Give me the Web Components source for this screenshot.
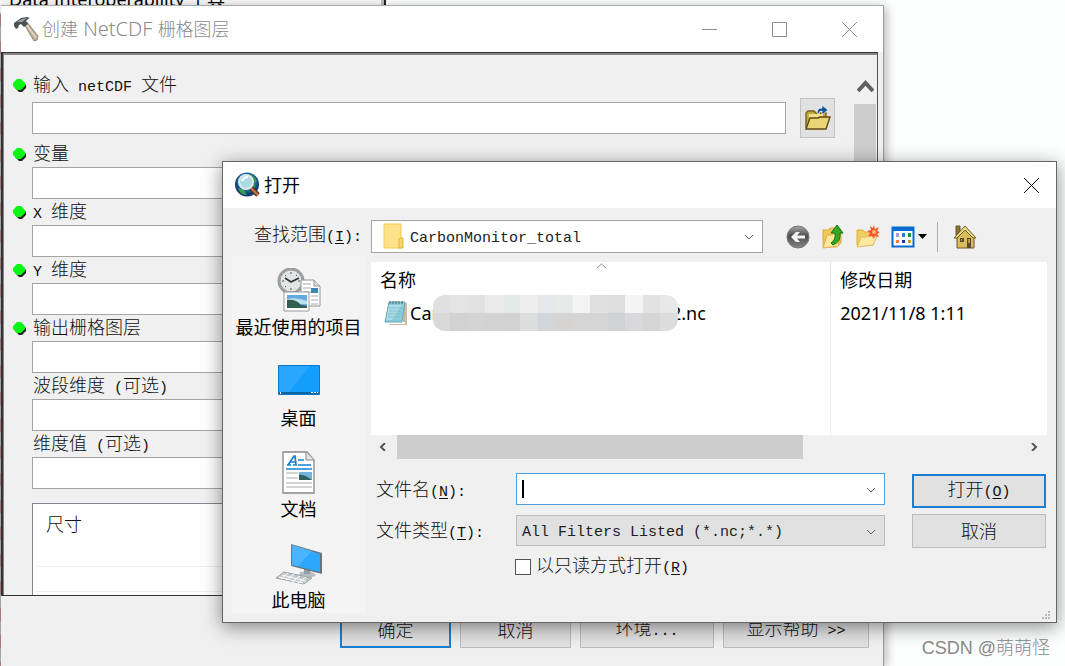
<!DOCTYPE html>
<html lang="zh-CN">
<head>
<meta charset="utf-8">
<title>创建 NetCDF 栅格图层</title>
<style>
    body {
        margin: 0;
        height: 100vh;
        overflow: hidden;
        background: #fdfefe;
        font: 18px/24px "Noto Sans", "Noto Sans CJK SC", sans-serif;
        color: #000;
    }
</style>
</head>
<body>
<desk-top></desk-top>
<script>
const base = `
    *, *::before, *::after { box-sizing: border-box; }
    [hidden] { display: none; }
    button, input, select { font: inherit; color: inherit; margin: 0; border-radius: 0; outline: none; }
    svg { display: block; }
    .latin { font-family: "Liberation Mono", monospace; font-size: 15px; font-weight: 400; white-space: pre; }
    u { text-underline-offset: 2px; }
`;

// latin runs get half-width glyphs, &X marks the access key
function mixed(text) {
    return text.replace(/[\x20-\x7e]+/g, run => {
        const safe = run.replace(/>/g, '&gt;').replace(/&([A-Z])/, '<u>$1</u>');
        return `<span class="latin">${safe}</span>`;
    });
}

function render(host, css, html) {
    const template = document.createElement('template');
    template.innerHTML = `<style>${base}${css}</style>${html}`;
    host.attachShadow({ mode: 'open' });
    host.shadowRoot.appendChild(template.content.cloneNode(true));
}

const icons = {
    hammer: `<svg width="26" height="26" viewBox="0 0 26 26">
        <path d="M11 8l3-2 11 14-1 4-3 1z" fill="#b9aa92" stroke="#8a7c68" stroke-width=".8"/>
        <path d="M13 8l10 14" stroke="#e4dac6" stroke-width="1.5"/>
        <path d="M1 7l3-2 4-3 6-1 3 1-2 1-2 2 2 3-4 3-3-3-2 1-1 3-2 1-2-3z" fill="#4c5154"/>
        <path d="M4 6l5-3 5-1-5 4z" fill="#a0a6a8"/></svg>`,
    globe: `<svg width="26" height="26" viewBox="0 0 26 26">
        <defs><radialGradient id="sea" cx=".5" cy=".4"><stop offset="0" stop-color="#5ac0d0"/><stop offset=".65" stop-color="#1477a0"/><stop offset="1" stop-color="#123a73"/></radialGradient></defs>
        <circle cx="12" cy="12.5" r="12" fill="url(#sea)"/>
        <path d="M14 2c4 1 7 4 8 8l-3 1 1 4-4 1-3-6zM3 16l6 2 3 5c-5 0-8-3-9-7z" fill="#3e9b50"/>
        <path d="M16 16l7 7" stroke="#532d1a" stroke-width="5"/><path d="M16 16l7 7" stroke="#bd7047" stroke-width="2.5"/>
        <circle cx="11" cy="10" r="7" fill="#acdbe5" stroke="#dfe9ed" stroke-width="2"/>
        <path d="M7 9q2-4 6-4" stroke="#fff" stroke-width="2" fill="none"/></svg>`,
    browse: `<svg width="26" height="26" viewBox="0 0 26 26">
        <path d="M1 23V8l2-2h6l2 2h10v4" fill="#c7a83a" stroke="#79621b" stroke-width="1.4"/>
        <path d="M4 9h14l-1 5H4z" fill="#f2df8e"/>
        <path d="M1 24l4-11h8l2-1h10l-4 12z" fill="#ecd576" stroke="#5e4a10" stroke-width="1.4"/>
        <path d="M12 8q0-5 5-5V0l6 5-6 5V6q-3 0-3 3z" fill="#15559e" stroke="#fff" stroke-width=".7"/></svg>`,
    folder: `<svg width="21" height="26" viewBox="0 0 21 26">
        <path d="M1 1h17v24H1z" fill="#fde28a" stroke="#f0ca50"/><path d="M16 25v-9l1-1h3v10z" fill="#f8d568" stroke="#e2b937"/></svg>`,
    back: `<svg width="24" height="24" viewBox="0 0 24 24">
        <defs><linearGradient id="steel" x2="0" y2="1"><stop offset="0" stop-color="#a8a8a8"/><stop offset=".45" stop-color="#4d4d4d"/><stop offset="1" stop-color="#878787"/></linearGradient></defs>
        <circle cx="12" cy="12" r="11" fill="url(#steel)" stroke="#777"/>
        <path d="M19 10.5h-8L14 7h-4l-5 5 5 5h4l-3-3.500h8z" fill="#f5f5f5"/></svg>`,
    up: `<svg width="24" height="26" viewBox="0 0 24 26">
        <path d="M2 6h6l1-2h9l2 2v13l-5 4H2z" fill="#f0c857" stroke="#d9a93a"/>
        <path d="M2 24l4-13h5l2-2h7l-3 13z" fill="#fde99e" stroke="#dfb34a"/>
        <path d="M10 19q5-3 4-10h-4l6-8 6 8h-3q1 9-7 12z" fill="#35a828" stroke="#14730f"/></svg>`,
    create: `<svg width="24" height="24" viewBox="0 0 24 24">
        <path d="M1 5h6l2 2h8v13H1z" fill="#f3cd62" stroke="#dfae45"/>
        <path d="M1 22l4-10h5l2-2h10l-5 10z" fill="#fdeaa2" stroke="#e3b655"/>
        <path d="M18 0l1 4 4-2-2 4 3 1-3 2 2 3-4-1-1 3-2-3-4 1 2-4-3-2 4-1-1-4 3 2z" fill="#f8562c"/><circle cx="18" cy="7" r="2" fill="#ffba78"/></svg>`,
    views: `<svg width="24" height="24" viewBox="0 0 24 24">
        <rect x="1.500" y="2.500" width="21" height="19" fill="#fff" stroke="#096bd1" stroke-width="2"/><path d="M1 2h22v4H1z" fill="#096bd1"/>
        <path d="M5 8h3v4H5z" fill="#a89bd2"/><path d="M11 8h3v4h-3z" fill="#1285e4"/><path d="M17 8h3v4h-3z" fill="#15942b"/>
        <path d="M5 15h3v3H5z" fill="#fb7647"/><path d="M11 15h3v3h-3z" fill="#0c38a0"/><path d="M17 15h3v3h-3z" fill="#cf9c0d"/></svg>`,
    home: `<svg width="24" height="24" viewBox="0 0 24 24">
        <path d="M3 10V1h4v5z" fill="#8a7434" stroke="#6b5624"/>
        <path d="M4 12v11h17V12l-8-8z" fill="#d8bd5b" stroke="#6b5624"/>
        <path d="M1 13L12 1l11 12h-3l-8-8-8 8z" fill="#eddc86" stroke="#6b5624"/>
        <path d="M7 13h4v4H7zM14 13h4v10h-4z" fill="#5b4929"/><path d="M8 14h1v2H8zM15 14h2v4h-2z" fill="#b49544"/></svg>`,
    note: `<svg width="25" height="26" viewBox="0 0 25 26">
        <path d="M19 3h4v22H6l-1-2h14z" fill="#c8bc99"/><path d="M5 22h16v2H5z" fill="#fff"/>
        <path d="M5 2h16l-3 20H1z" fill="#8ccbd9" stroke="#63a9ba"/>
        <path d="M5 5h13L8 20H2z" fill="#c0e8ef" opacity=".6"/>
        <path d="M5 8h13M5 11h12M4 14h13M4 17h12" stroke="#6cb3c3" stroke-width=".6"/>
        <path d="M6 1v3M9 1v3M12 1v3M15 1v3M18 1v3" stroke="#4a6970"/></svg>`,
    recent: `<svg width="44" height="44" viewBox="0 0 44 44">
        <circle cx="14" cy="13" r="12" fill="#e2e5e6" stroke="#999ea0" stroke-width="3"/>
        <path d="M14 4v2M14 20v2M5 13h2M21 13h2M8 7l1 1M20 7l-1 1M8 19l1-1" stroke="#555"/>
        <path d="M8 10l6 4 8-4" fill="none" stroke="#333" stroke-width="1.7"/>
        <path d="M24 12h13l6 6v20H24z" fill="#fff" stroke="#929292"/><path d="M37 12v6h6" fill="#ddd" stroke="#929292"/>
        <path d="M26 16h8M26 20h8M26 24h8M34 28h7M34 32h7M34 36h7" stroke="#aaa"/><path d="M34 20h7v5h-7z" fill="#3d87b2"/>
        <path d="M7 24h25v19H7z" fill="#fff" stroke="#999"/><path d="M10 27h20v13H10z" fill="#65aadc"/>
        <path d="M10 31q10-2 20 2v3H10z" fill="#bce0ee"/><path d="M10 32q9-1 14 5l6 1v2H10z" fill="#315f50"/></svg>`,
    desktop: `<svg width="44" height="44" viewBox="0 0 44 44">
        <path d="M1.500 6.500h41v29h-41z" fill="#139dfc" stroke="#0878c7"/><path d="M2 7h31L12 33H2z" fill="#35acff" opacity=".65"/>
        <path d="M2 33h40v2H2z" fill="#0a66a2"/><path d="M3 33h1v2H3zM34 33h2v1h-2zM37 33h2v1h-2zM40 33h1v1h-1z" fill="#fff"/></svg>`,
    documents: `<svg width="44" height="44" viewBox="0 0 44 44">
        <path d="M6 2h24l7 8v33H6z" fill="#fff" stroke="#888" stroke-width="1.3"/><path d="M29 2v8h8" fill="#e4e4e4" stroke="#888"/>
        <path d="M11 15l6-9h1l1 9M13 12h6M10 15h4M16 15h4" stroke="#1384d2" stroke-width="1.700" fill="none"/>
        <path d="M21 10h6M21 15h13M9 19h26" stroke="#1384d2" stroke-width="1.500"/>
        <path d="M9 23h12M9 28h12M9 33h26M9 37h26" stroke="#aaa"/><path d="M22 22h13v8H22z" fill="#73b4df"/><path d="M22 25q5-1 13 5H22z" fill="#30615e"/></svg>`,
    computer: `<svg width="48" height="44" viewBox="0 0 48 44">
        <path d="M25 31l8-1 6 2 2 3-9 2-8-2z" fill="#b6bec3"/><path d="M29 25l6 1v7h-6z" fill="#929fa7"/>
        <path d="M16 3l31 9v21l-31-8z" fill="#68757c"/><path d="M17 4l28 9v18L17 24z" fill="#2ba7fc"/><path d="M17 4l20 6-14 15-6-1z" fill="#60bcff" opacity=".6"/>
        <path d="M9 31l28 6-8 6-28-6z" fill="#c3c8cb" stroke="#9ca4a8"/>
        <path d="M7 34l24 6M4 36l24 6M13 32l-7 6M19 33l-8 6M25 35l-8 6M31 36l-8 6" stroke="#fff"/></svg>`,
};

class AppIcon extends HTMLElement {
    constructor() {
        super();
        render(this, ':host { display: block; flex: none; }', icons[this.getAttribute('name')]);
    }
}
customElements.define('app-icon', AppIcon);

class WinButton extends HTMLElement {
    constructor() {
        super();
        render(this, `
            :host { display: block; height: 34px; }
            button {
                display: block; width: 100%; height: 100%; padding: 0;
                background: #e1e1e1; border: 1px solid #bcbcbc; color: #111; font-weight: 300;
            }
            :host([default]) button { border: 2px solid #1a7fd4; }
        `, `<button type="button">${mixed(this.getAttribute('text'))}</button>`);
    }
}
customElements.define('win-button', WinButton);

// Window frame: title bar over whatever is slotted in
class WinFrame extends HTMLElement {
    constructor() {
        super();
        const single = this.hasAttribute('dialog') ? 'hidden' : '';
        const caption = this.getAttribute('caption').replace(/[\x20-\x7e]+/g, '<span class="sans">$&</span>');
        render(this, `
            :host { display: flex; flex-direction: column; background: #f0f0f0; }
            header {
                display: flex; align-items: center; flex: none; height: 46px;
                padding-left: 12px; background: #fff; color: var(--caption, #000);
            }
            h1 { flex: 1; margin: 0 0 0 3px; font-size: 18px; font-weight: var(--caption-weight, 400); }
            .sans { font-size: 20px; white-space: pre; }
            header button { width: 70px; height: 46px; padding: 0; border: 0; background: none; display: grid; place-items: center; }
            header button:last-child { width: 50px; margin: 0 var(--close-gap, 0) 0 10px; }
            header svg { fill: none; stroke: currentColor; }
        `, `
            <header>
                <app-icon name="${this.getAttribute('icon')}"></app-icon>
                <h1>${caption}</h1>
                <button aria-label="最小化" ${single}><svg width="15" height="15"><path d="M0 7.500h15"/></svg></button>
                <button aria-label="最大化" ${single}><svg width="15" height="15"><path d="M.5.5h14v14H.5z"/></svg></button>
                <button aria-label="关闭"><svg width="15" height="15"><path d="M0 0l15 15M15 0L0 15"/></svg></button>
            </header>
            <slot></slot>
        `);
    }
}
customElements.define('win-frame', WinFrame);

class ToolField extends HTMLElement {
    constructor() {
        super();
        render(this, `
            :host { display: grid; grid-template-columns: 19px 1fr 35px; align-items: center; }
            label { grid-column: 2 / 4; height: 26px; line-height: 24px; padding-left: 1px; color: #111; font-weight: 300; }
            input { grid-column: 2; height: 32px; margin-right: 14px; border: 1px solid #a5a5a5; background: #fff; padding: 0 5px; }
            svg { visibility: hidden; }
            :host([required]) svg { visibility: visible; }
            button { width: 35px; height: 40px; padding: 0; border: 1px solid #c3c3c3; background: #e1e1e1; display: grid; place-items: center; }
        `, `
            <svg width="13" height="13" viewBox="0 0 13 13"><path d="M5 2h4l4 4v3l-4 4H6L2 9z" fill="#222"/><path d="M4 0h4l4 4v3l-4 4H4L0 7V4z" fill="#0cf514"/></svg>
            <label for="value">${mixed(this.getAttribute('label'))}</label>
            <input id="value">
            ${this.hasAttribute('browse') ? '<button aria-label="浏览"><app-icon name="browse"></app-icon></button>' : ''}
        `);
    }
}
customElements.define('tool-field', ToolField);

class ToolForm extends HTMLElement {
    constructor() {
        super();
        render(this, `
            :host { display: flex; flex-direction: column; flex: 1; min-height: 0; }
            .panel {
                flex: 1; min-height: 0; display: flex; overflow: hidden; margin-right: 5px;
                padding: 17px 1px 0 10px; background: #f0f0f0;
                border: 1px solid #333; border-left-width: 2px; border-right-color: #555;
                box-shadow: inset 1px 2px #858585;
            }
            .fields { flex: 1; padding: 2px 19px 0 0; }
            tool-field[browse] { margin-bottom: 3px; }
            .list { margin: 14px 49px 0 19px; height: 150px; border: 1px solid #828790; background: #fff; color: #111; font-weight: 300; }
            .list div { height: 25px; margin: 0 3px; border-bottom: 1px solid #eee; }
            .list div:first-child { height: 63px; padding: 8px 10px; }
            .bar { width: 22px; display: flex; flex-direction: column; }
            .bar svg { flex: none; margin: 10px 0 11px 3px; }
            .thumb { flex: 1; background: #cdcdcd; }
            footer { display: flex; flex: none; justify-content: flex-end; gap: 9px; padding: 16px 14px 18px; }
            win-button { height: 36px; width: 111px; }
            win-button:nth-child(3) { width: 134px; }
            win-button:last-child { width: 146px; }
        `, `
            <div class="panel">
                <div class="fields">
                    <tool-field label="输入 netCDF 文件" required browse></tool-field>
                    <tool-field label="变量" required></tool-field>
                    <tool-field label="X 维度" required></tool-field>
                    <tool-field label="Y 维度" required></tool-field>
                    <tool-field label="输出栅格图层" required></tool-field>
                    <tool-field label="波段维度 (可选)"></tool-field>
                    <tool-field label="维度值 (可选)"></tool-field>
                    <div class="list"><div>尺寸</div><div></div><div></div></div>
                </div>
                <div class="bar">
                    <svg width="17" height="13"><path d="M1 11l7.500-8 7.500 8" fill="none" stroke="#606060" stroke-width="4"/></svg>
                    <div class="thumb"></div>
                </div>
            </div>
            <footer>
                <win-button text="确定" default></win-button>
                <win-button text="取消"></win-button>
                <win-button text="环境..."></win-button>
                <win-button text="显示帮助 >>"></win-button>
            </footer>
        `);
    }
}
customElements.define('tool-form', ToolForm);

class PlaceItem extends HTMLElement {
    constructor() {
        super();
        render(this, `
            :host { display: block; }
            button { display: grid; justify-items: center; gap: 3px; width: 100%; padding: 0; border: 0; background: none; white-space: nowrap; }
        `, `<button type="button"><app-icon name="${this.getAttribute('icon')}"></app-icon><slot></slot></button>`);
    }
}
customElements.define('place-item', PlaceItem);

class FileList extends HTMLElement {
    constructor() {
        super();
        const tops = ['e0e0e0', 'e4e4e4', 'e1e1e1', 'eaeaea', 'e5e9e8', 'eeeeee', 'e4e8ea', 'e8e9e9', 'f3f3f3', 'e0e0e0', 'dedede', 'f4f4f4', 'e2e2e2', 'e8e8e8'];
        const lows = ['d9d9d9', 'd2d2d3', 'd5d4d5', 'd4d3d1', 'd2d2d3', 'dcdddf', 'd2d5d9', 'd5d4d2', 'd6d5d5', 'd5d5d6', 'd1d2d4', 'd9d9db', 'd5d5d5', 'dcdcdc'];
        const tiles = tops.concat(lows).map(c => `<i style="background: #${c}"></i>`).join('');
        render(this, `
            :host { display: block; }
            .view { position: relative; height: 173px; background: #fff; }
            table { width: 100%; height: 100%; table-layout: fixed; border-collapse: collapse; }
            th, td { padding: 0 0 0 9px; text-align: left; font-weight: 400; white-space: nowrap; }
            th { height: 36px; }
            th:first-child { width: 68%; }
            th + th { border-left: 1px solid #e6e6e6; }
            td + td { border-left: 1px solid #e3f1fb; }
            .file td { height: 29px; }
            .name { display: flex; align-items: center; height: 29px; padding-left: 4px; }
            .name app-icon { margin-right: 1px; }
            .mosaic {
                display: grid; grid-template-columns: repeat(14, 1fr); width: 245px; height: 36px;
                margin: 0 -7px 0 -6px; border-radius: 12px; overflow: hidden; position: relative;
            }
            .sort { position: absolute; top: 1px; left: 226px; }
            .bar { display: flex; align-items: center; height: 24px; }
            .thumb { width: 60%; height: 24px; margin: 0 auto 0 1px; background: #cdcdcd; }
            .bar svg { flex: none; margin: 0 9px 0 8px; fill: none; stroke: #555; stroke-width: 2; }
        `, `
            <div class="view">
                <table>
                    <thead><tr><th>名称</th><th>修改日期</th></tr></thead>
                    <tbody>
                        <tr class="file">
                            <td><div class="name"><app-icon name="note"></app-icon><span>Car</span><div class="mosaic">${tiles}</div><span>2.nc</span></div></td>
                            <td>2021/11/8 1:11</td>
                        </tr>
                        <tr><td></td><td></td></tr>
                    </tbody>
                </table>
                <svg class="sort" width="9" height="5"><path d="M0 5l4.500-4L9 5" fill="none" stroke="#888"/></svg>
            </div>
            <div class="bar">
                <svg width="8" height="8"><path d="M6 0L2 4l4 4"/></svg>
                <div class="thumb"></div>
                <svg width="8" height="8"><path d="M2 0l4 4-4 4"/></svg>
            </div>
        `);
    }
}
customElements.define('file-list', FileList);

class OpenDialog extends HTMLElement {
    constructor() {
        super();
        const chevron = '<svg class="chevron" width="10" height="6"><path d="M1 1l4 4 4-4" fill="none" stroke="#666"/></svg>';
        render(this, `
            :host {
                display: grid; grid-template-columns: 133px minmax(0, 1fr); gap: 3px 6px;
                padding: 12px 9px 9px 9px; position: relative;
            }
            label { color: #111; font-weight: 300; }
            .look { text-align: right; padding-right: 3px; padding-top: 2px; white-space: nowrap; }
            .top { display: flex; align-items: center; }
            .combo { position: relative; flex: 1; height: 32px; }
            .combo select, .combo input {
                appearance: none; display: block; width: 100%; height: 100%; padding: 3px 24px 0 5px;
                border: 1px solid #a5a5a5; background: #fff; color: #222;
                font: 15px "Liberation Mono", monospace;
            }
            .combo.folder { height: 33px; }
            .combo.folder select { padding-left: 38px; }
            .folder app-icon { position: absolute; left: 12px; top: 3px; }
            .chevron { position: absolute; right: 9px; top: 14px; pointer-events: none; }
            .combo input { border-color: #4c9ede; }
            .combo.type select { background: #e1e1e1; border-color: #bcbcbc; }
            .caret { position: absolute; left: 6px; top: 7px; width: 2px; height: 18px; background: #000; }
            .tools { display: flex; align-items: center; gap: 11px; margin: 0 70px 0 23px; }
            .tools button { display: flex; align-items: center; gap: 3px; padding: 0; border: 0; background: none; }
            .tools hr { width: 1px; height: 30px; margin: 0 4px 0 -1px; border: 0; background: #aaa; }
            nav { display: flex; flex-direction: column; gap: 20px; padding: 12px 0 1px; background: #f4f4f4; }
            .main { padding-top: 6px; }
            form { display: flex; gap: 27px; margin-top: 14px; padding-right: 1px; }
            .inputs { flex: 1; display: grid; grid-template-columns: 140px 1fr; row-gap: 10px; align-items: center; padding-left: 5px; }
            .inputs > label { padding-top: 3px; }
            .type { height: 31px; }
            .buttons { width: 134px; padding-top: 1px; display: grid; gap: 6px; align-content: start; }
            .check { grid-column: 2; display: flex; align-items: center; gap: 5px; height: 22px; margin-left: -1px; }
            .check input { appearance: none; width: 16px; height: 16px; border: 1px solid #555; background: #fff; }
            .grip { position: absolute; right: 5px; bottom: 2px; fill: #bbb; }
        `, `
            <label class="look" for="look">${mixed('查找范围(&I):')}</label>
            <div class="top">
                <div class="combo folder">
                    <select id="look"><option>CarbonMonitor_total</option></select>
                    <app-icon name="folder"></app-icon>${chevron}
                </div>
                <div class="tools">
                    <button aria-label="后退"><app-icon name="back"></app-icon></button>
                    <button aria-label="向上一级"><app-icon name="up"></app-icon></button>
                    <button aria-label="新建文件夹"><app-icon name="create"></app-icon></button>
                    <button aria-label="视图"><app-icon name="views"></app-icon><svg width="9" height="5"><path d="M0 0h9L4.500 5z"/></svg></button>
                    <hr>
                    <button aria-label="主目录"><app-icon name="home"></app-icon></button>
                </div>
            </div>
            <nav>
                <place-item icon="recent">最近使用的项目</place-item>
                <place-item icon="desktop">桌面</place-item>
                <place-item icon="documents">文档</place-item>
                <place-item icon="computer">此电脑</place-item>
            </nav>
            <div class="main">
                <file-list></file-list>
                <form>
                    <div class="inputs">
                        <label for="name">${mixed('文件名(&N):')}</label>
                        <div class="combo"><input id="name"><span class="caret"></span>${chevron}</div>
                        <label for="type">${mixed('文件类型(&T):')}</label>
                        <div class="combo type"><select id="type"><option>All Filters Listed (*.nc;*.*)</option></select>${chevron}</div>
                        <div class="check"><input type="checkbox" id="readonly"><label for="readonly">${mixed('以只读方式打开(&R)')}</label></div>
                    </div>
                    <div class="buttons">
                        <win-button text="打开(&O)" default></win-button>
                        <win-button text="取消"></win-button>
                    </div>
                </form>
            </div>
            <svg class="grip" width="9" height="9"><path d="M6 0h2v2H6zM3 3h2v2H3zM6 3h2v2H6zM0 6h2v2H0zM3 6h2v2H3zM6 6h2v2H6z"/></svg>
        `);
    }
}
customElements.define('open-dialog', OpenDialog);

class DeskTop extends HTMLElement {
    constructor() {
        super();
        render(this, `
            :host {
                display: block; position: relative; height: 100%; overflow: hidden;
                background: linear-gradient(#fdfefe, #fdfefe) 1px 0 no-repeat, repeating-linear-gradient(#b5b5b5 0 14px, #b08888 14px 27px);
            }
            .behind {
                position: absolute; left: 0; top: -13px; width: 386px; height: 26px; padding-left: 9px;
                background: #f8f8f8; border-right: 2px solid #222; box-shadow: inset -3px 0 #bbb; white-space: nowrap;
            }
            win-frame { position: absolute; }
            .tool {
                left: 1px; right: 181px; top: 5px; bottom: 0; --caption: #8c8c8c; --caption-weight: 300; --close-gap: 9px;
                border-top: 1px solid #aaa; border-right: 1px solid #999; box-shadow: 2px 2px 10px rgb(0 0 0 / 30%);
            }
            .open { left: 222px; right: 8px; top: 161px; border: 1px solid #666; box-shadow: 0 4px 18px rgb(0 0 0 / 45%); }
            .mark {
                position: absolute; right: 15px; bottom: 6px; color: #8a8a8a;
                font-family: "Liberation Sans", "Noto Sans CJK SC", sans-serif; font-weight: 300;
            }
        `, `
            <div class="behind">Data Interoperability 工具</div>
            <win-frame class="tool" icon="hammer" caption="创建 NetCDF 栅格图层"><tool-form></tool-form></win-frame>
            <div class="mark">CSDN @萌萌怪</div>
            <win-frame class="open" icon="globe" caption="打开" dialog><open-dialog></open-dialog></win-frame>
        `);
    }
}
customElements.define('desk-top', DeskTop);
</script>
</body>
</html>
